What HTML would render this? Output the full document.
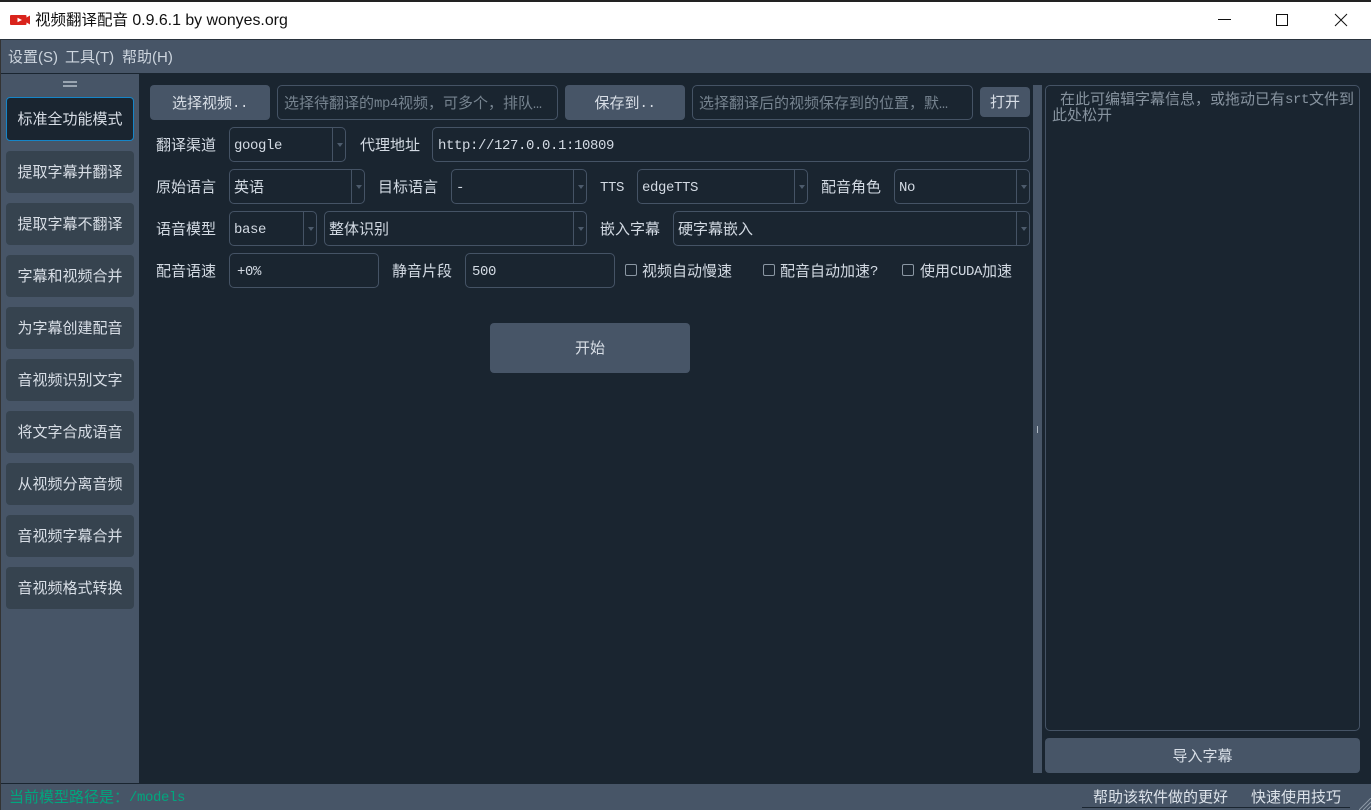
<!DOCTYPE html>
<html lang="zh"><head><meta charset="utf-8"><title>视频翻译配音</title>
<style>
*{box-sizing:border-box;margin:0;padding:0}
html,body{width:1371px;height:810px;overflow:hidden;background:#1a2530}
body{position:relative;font-family:"Liberation Mono","WenQuanYi Zen Hei","Noto Sans CJK SC",monospace;font-size:15px;color:#d3dae3}
div{position:absolute}
b{font-weight:normal;font-size:14px;letter-spacing:-.4px;font-family:"Liberation Mono",monospace;position:relative;top:-1px}
.t{white-space:nowrap;line-height:20px;height:20px;margin-top:2px}
.b{background:#475567;border-radius:4px;text-align:center;color:#d8dee6;padding-top:2px}
.n{left:6px;width:128px;height:42px;line-height:42px;background:#36434f;border-radius:4px;text-align:center;color:#d8dee6;padding-top:2px}
.i{border:1px solid #455365;border-radius:5px;background:#1a2530;line-height:33px;padding-left:5px;padding-top:2px;white-space:nowrap;overflow:hidden}
.p{color:#76838f}
.c{border:1px solid #455365;border-radius:5px;line-height:33px;padding-left:4px;padding-top:2px;white-space:nowrap}
.c:before{content:"";position:absolute;right:12px;top:0;bottom:0;width:1px;background:#455365}
.c:after{content:"";position:absolute;right:2px;top:15px;border-left:3.5px solid transparent;border-right:3.5px solid transparent;border-top:4px solid #4d5b6c}
.k{width:12px;height:12px;border:1px solid #8b97a3;border-radius:2px;top:264px}
.s{font-family:'Liberation Sans','Noto Sans CJK SC',sans-serif}
</style></head><body>
<div style="left:0;top:0;width:1371px;height:2px;background:#222"></div>
<div style="left:0;top:2px;width:1371px;height:37px;background:#fff"></div>
<div style="left:0;top:39px;width:1371px;height:1px;background:#2a333d"></div>
<svg style="position:absolute;left:10px;top:14px" width="20" height="12" viewBox="0 0 20 12"><path d="M1 1H15.500Q16.500 1 16.500 2V3.500L20 1.500V10.500L16.500 8.500V10Q16.500 11 15.500 11H1Q0 11 0 10V2Q0 1 1 1Z" fill="#d9241c"/><path d="M7.500 3.800V8.200L12 6Z" fill="#fff"/></svg>
<div class="t s" style="left:35px;top:9px;color:#111;font-size:15.500px">视频翻译配音 <span style="font-size:15.900px">0.9.6.1 by wonyes.org</span></div>
<svg style="position:absolute;left:1210px;top:8px" width="150" height="24" viewBox="0 0 150 24" fill="none" stroke="#111" stroke-width="1"><path d="M8 11.500H21"/><rect x="66.500" y="6.500" width="11" height="11"/><path d="M125 6L137 18M137 6L125 18"/></svg>

<div style="left:1px;top:40px;width:1370px;height:33px;background:#475567"></div>
<div class="t s" style="left:8px;top:46px;color:#cdd5de">设置(S)</div>
<div class="t s" style="left:65px;top:46px;color:#cdd5de">工具(T)</div>
<div class="t s" style="left:122px;top:46px;color:#cdd5de">帮助(H)</div>

<div style="left:0;top:40px;width:1px;height:770px;background:#333"></div>
<div style="left:1px;top:74px;width:138px;height:709px;background:#475567"></div>
<div style="left:63px;top:81px;width:14px;height:2px;background:#9aa5b1"></div>
<div style="left:63px;top:85px;width:14px;height:2px;background:#9aa5b1"></div>
<div class="n" style="top:97px;height:44px;line-height:42px;background:#1a2530;border:1px solid #1585c8">标准全功能模式</div>
<div class="n" style="top:151px">提取字幕并翻译</div>
<div class="n" style="top:203px">提取字幕不翻译</div>
<div class="n" style="top:255px">字幕和视频合并</div>
<div class="n" style="top:307px">为字幕创建配音</div>
<div class="n" style="top:359px">音视频识别文字</div>
<div class="n" style="top:411px">将文字合成语音</div>
<div class="n" style="top:463px">从视频分离音频</div>
<div class="n" style="top:515px">音视频字幕合并</div>
<div class="n" style="top:567px">音视频格式转换</div>

<div class="b" style="left:150px;top:85px;width:120px;height:35px;line-height:35px">选择视频<b>..</b></div>
<div class="i p" style="left:277px;top:85px;width:281px;height:35px;padding-left:6px">选择待翻译的<b>mp4</b>视频，可多个，排队…</div>
<div class="b" style="left:565px;top:85px;width:120px;height:35px;line-height:35px">保存到<b>..</b></div>
<div class="i p" style="left:692px;top:85px;width:281px;height:35px;padding-left:6px">选择翻译后的视频保存到的位置，默…</div>
<div class="b" style="left:980px;top:87px;width:50px;height:30px;line-height:30px">打开</div>

<div class="t" style="left:156px;top:135px">翻译渠道</div>
<div class="c" style="left:229px;top:127px;width:117px;height:35px"><b>google</b></div>
<div class="t" style="left:360px;top:135px">代理地址</div>
<div class="i" style="left:432px;top:127px;width:598px;height:35px"><b>http://127.0.0.1:10809</b></div>

<div class="t" style="left:156px;top:177px">原始语言</div>
<div class="c" style="left:229px;top:169px;width:136px;height:35px">英语</div>
<div class="t" style="left:378px;top:177px">目标语言</div>
<div class="c" style="left:451px;top:169px;width:136px;height:35px"><b>-</b></div>
<div class="t" style="left:600px;top:177px"><b>TTS</b></div>
<div class="c" style="left:637px;top:169px;width:171px;height:35px"><b>edgeTTS</b></div>
<div class="t" style="left:821px;top:177px">配音角色</div>
<div class="c" style="left:894px;top:169px;width:136px;height:35px"><b>No</b></div>

<div class="t" style="left:156px;top:219px">语音模型</div>
<div class="c" style="left:229px;top:211px;width:88px;height:35px"><b>base</b></div>
<div class="c" style="left:324px;top:211px;width:263px;height:35px">整体识别</div>
<div class="t" style="left:600px;top:219px">嵌入字幕</div>
<div class="c" style="left:673px;top:211px;width:357px;height:35px">硬字幕嵌入</div>

<div class="t" style="left:156px;top:261px">配音语速</div>
<div class="i" style="left:229px;top:253px;width:150px;height:35px;padding-left:7px"><b>+0%</b></div>
<div class="t" style="left:392px;top:261px">静音片段</div>
<div class="i" style="left:465px;top:253px;width:150px;height:35px;padding-left:6px"><b>500</b></div>
<div class="k" style="left:625px"></div>
<div class="t" style="left:642px;top:261px">视频自动慢速</div>
<div class="k" style="left:763px"></div>
<div class="t" style="left:780px;top:261px">配音自动加速<b>?</b></div>
<div class="k" style="left:902px"></div>
<div class="t" style="left:920px;top:261px">使用<b>CUDA</b>加速</div>

<div class="b" style="left:490px;top:323px;width:200px;height:50px;line-height:50px">开始</div>

<div style="left:1033px;top:85px;width:9px;height:688px;background:#475567"></div>
<div style="left:1037px;top:426px;width:1px;height:7px;background:#aeb8c2"></div>
<div class="p" style="left:1045px;top:85px;width:315px;height:646px;border:1px solid #455365;border-radius:5px;padding:7px 3px 7px 6px;line-height:16px;text-indent:8px;color:#87939f;white-space:normal;word-break:break-all">在此可编辑字幕信息，或拖动已有<b>srt</b>文件到<br>此处松开</div>
<div class="b" style="left:1045px;top:738px;width:315px;height:35px;line-height:35px">导入字幕</div>

<div style="left:1px;top:784px;width:1370px;height:26px;background:#475567"></div>
<div class="t" style="left:9px;top:787px;color:#00a67e">当前模型路径是：<b>/models</b></div>
<div class="t" style="left:1093px;top:787px;color:#dde3ea">帮助该软件做的更好</div>
<div class="t" style="left:1251px;top:787px;color:#dde3ea">快速使用技巧</div>
<div style="left:1082px;top:807px;width:268px;height:1px;background:#1a2530"></div>
<svg style="position:absolute;left:1359px;top:798px" width="12" height="12" viewBox="0 0 12 12" stroke="#8d99a6" stroke-width="1"><path d="M0 12L12 0M4 12L12 4M8 12L12 8"/></svg>
</body></html>
